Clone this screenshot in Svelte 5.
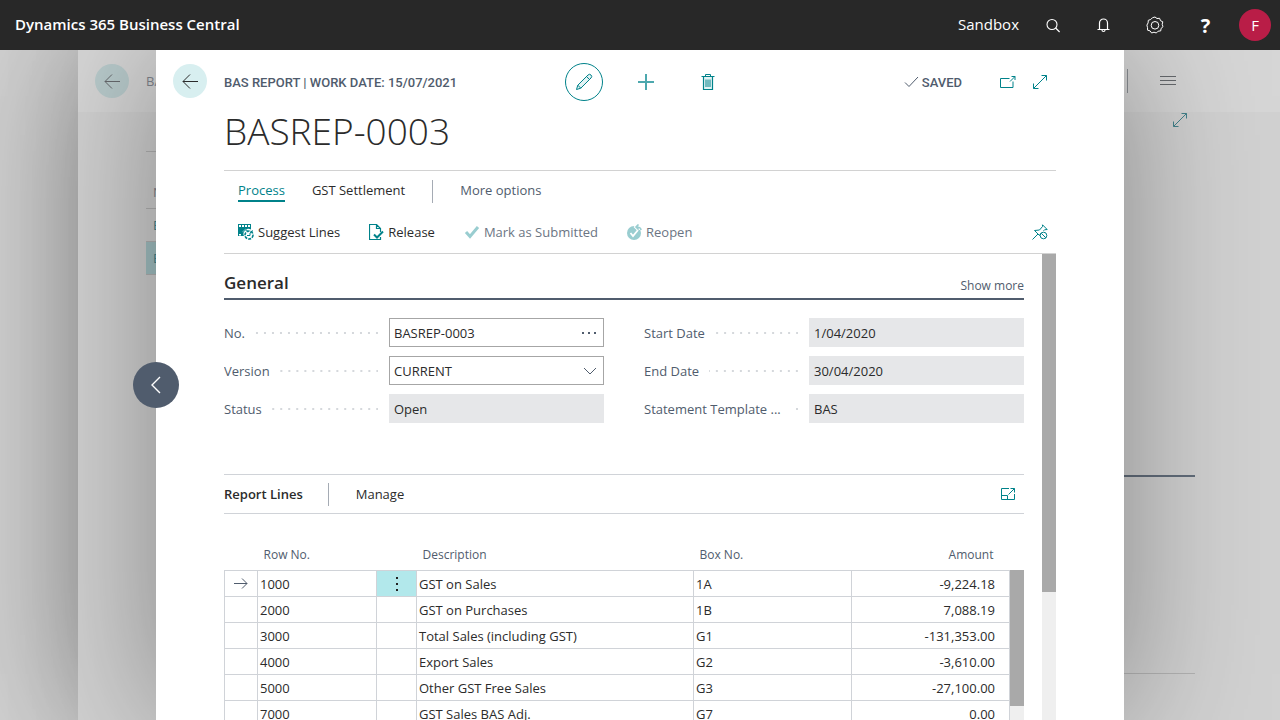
<script lang="ts">
	interface Line {
		no: string;
		description: string;
		box: string;
		amount: string;
	}

	let no = $state('BASREP-0003');
	let version = $state('CURRENT');
	let selected = $state(0);

	const tabs = ['Process', 'GST Settlement'];
	let activeTab = $state('Process');

	const lines: Line[] = [
		{ no: '1000', description: 'GST on Sales', box: '1A', amount: '-9,224.18' },
		{ no: '2000', description: 'GST on Purchases', box: '1B', amount: '7,088.19' },
		{ no: '3000', description: 'Total Sales (including GST)', box: 'G1', amount: '-131,353.00' },
		{ no: '4000', description: 'Export Sales', box: 'G2', amount: '-3,610.00' },
		{ no: '5000', description: 'Other GST Free Sales', box: 'G3', amount: '-27,100.00' },
		{ no: '7000', description: 'GST Sales BAS Adj.', box: 'G7', amount: '0.00' }
	];
</script>

{#snippet arrowLeft()}
	<svg width="16" height="16" viewBox="0 0 16 16" fill="none" stroke="currentColor">
		<path d="M16 8.500H1M8 1.500 1 8.500l7 7" />
	</svg>
{/snippet}

{#snippet expand()}
	<svg width="16" height="16" viewBox="0 0 16 16" fill="none" stroke="currentColor">
		<path d="M1.500 14.500 14.500 1.500M9.500 1.500h5v5M1.500 9.500v5h5" />
	</svg>
{/snippet}

<div class="shell">
	<header class="topbar">
		<span class="product">Dynamics 365 Business Central</span>
		<span class="environment">Sandbox</span>
		<nav>
			<button aria-label="Search">
				<svg width="16" height="16" viewBox="0 0 16 16" fill="none" stroke="currentColor" stroke-width="1.100">
					<circle cx="7" cy="7.500" r="5" />
					<path d="m10.600 11 4 4" />
				</svg>
			</button>
			<button aria-label="Notifications">
				<svg width="16" height="16" viewBox="0 0 16 16" fill="none" stroke="currentColor" stroke-width="1.200">
					<path d="M3.500 12.500V6a4 4 0 0 1 8 0v6.500M1.500 12.500h12M6 13a1.500 1.500 0 0 0 3 0" />
				</svg>
			</button>
			<button aria-label="Settings">
				<svg width="18" height="18" viewBox="0 0 18 18" fill="none" stroke="currentColor">
					<path d="m9 1 2 1.500 2.600-.2.900 2.400 2.300 1.100-.6 2.500.8 2.400-1.900 1.700-.4 2.500-2.600.3L10.300 17 8 16.200 5.600 17l-1.500-2.100-2.500-.7-.1-2.600L0.900 9.100l1.200-2.200.2-2.600 2.400-.8L6.500 1.700z" stroke-linejoin="round" />
					<circle cx="9" cy="9.300" r="3.800" />
				</svg>
			</button>
			<button class="help" aria-label="Help">?</button>
		</nav>
		<button class="avatar" aria-label="Account">F</button>
	</header>

	<main class="stage">
		<section class="behind" aria-hidden="true">
			<div class="behind-head">
				<span class="back">{@render arrowLeft()}</span>
				<span class="behind-title">BAS</span>
				<span class="behind-menu">
					<svg width="16" height="12" viewBox="0 0 16 12" stroke="currentColor"><path d="M0 1.500h16M0 5.500h16M0 9.500h16" /></svg>
				</span>
			</div>
			<div class="behind-body">
				<div class="behind-expand">{@render expand()}</div>
				<div class="behind-list">
					<div class="behind-row">No.</div>
					<div class="behind-row link">BAS</div>
					<div class="behind-row link current">BAS</div>
				</div>
				<div class="behind-part"></div>
			</div>
		</section>

		<section class="card">
			<button class="previous" aria-label="Previous record">
				<svg width="12" height="18" viewBox="0 0 12 18" fill="none" stroke="currentColor" stroke-width="1.400">
					<path d="M10 1 2 9l8 8" />
				</svg>
			</button>

			<div class="card-head">
				<button class="back" aria-label="Back">{@render arrowLeft()}</button>
				<span class="caption">BAS REPORT | WORK DATE: 15/07/2021</span>
				<div class="commands">
					<button class="round" aria-label="Edit">
						<svg width="18" height="18" viewBox="0 0 18 18" fill="none" stroke="currentColor">
							<path d="m1.500 16.500 1.300-4.300L13 2a2.100 2.100 0 0 1 3 3L5.800 15.200z" fill="#e3f3f4" />
							<path d="m2.800 12.200 3 3M11.500 3.500l3 3" />
						</svg>
					</button>
					<button aria-label="New">
						<svg width="18" height="18" viewBox="0 0 18 18" stroke="#4da8ae" stroke-width="2">
							<path d="M9 1v16M1 9h16" />
						</svg>
					</button>
					<button aria-label="Delete">
						<svg width="14" height="18" viewBox="0 0 14 18" fill="none" stroke="currentColor">
							<path d="M2.500 3.500h9v13h-9z" fill="#e3f3f4" stroke-width="1.200" />
							<path d="M0.500 3.500h13M4.500 3.500v-2h5v2M5 6.500v7.500M7 6.500v7.500M9 6.500v7.500" />
						</svg>
					</button>
				</div>
				<div class="status">
					<span class="saved">
						<svg width="15" height="12" viewBox="0 0 15 12" fill="none" stroke="currentColor"><path d="m1 6.500 4 4 9-9.500" /></svg>
						SAVED
					</span>
					<button aria-label="Open in new window">
						<svg width="16" height="14" viewBox="0 0 16 14" fill="none" stroke="currentColor">
							<path d="M9.500 3.500h-9v9h12.500v-6M10 6.500l5-5M11.500 1.500h3.500v3.500" />
						</svg>
					</button>
					<button aria-label="Expand page">{@render expand()}</button>
				</div>
			</div>

			<h1>BASREP-0003</h1>

			<nav class="tabs">
				{#each tabs as tab}
					<button class:active={tab === activeTab} onclick={() => (activeTab = tab)}>{tab}</button>
				{/each}
				<span class="separator"></span>
				<button class="more">More options</button>
			</nav>

			<div class="actions">
				<button>
					<svg width="16" height="16" viewBox="0 0 16 16">
						<path d="M0 0h13v5.500a5 5 0 0 0-7 6.500H0z" fill="#00828a" />
						<path d="M1 1h2v2H1zM4 1h2v2H4zM7 1h2v2H7zM10 1h2v2h-2zM1 10h2v1.500H1z" fill="#fff" />
						<path d="m4.500 8 3-2.500 3 2.500" fill="none" stroke="#4da8ae" stroke-width="1.500" />
						<circle cx="11" cy="11" r="4" fill="none" stroke="#00828a" stroke-width="1.600" stroke-dasharray="3 1" />
						<path d="M9 11.500h3V9l3-2.500" fill="none" stroke="#00828a" />
					</svg>
					Suggest Lines
				</button>
				<button>
					<svg width="15" height="16" viewBox="0 0 15 16" fill="none" stroke="#00828a">
						<path d="M11.500 13v2.500H.5V.5h7l4 4V8M7.500.5v4h4" stroke-width="1.200" />
						<path d="m5 10.500 3 3L14 7.500" stroke-width="2" />
					</svg>
					Release
				</button>
				<button disabled>
					<svg width="16" height="14" viewBox="0 0 16 14" fill="none" stroke="#99cdd0" stroke-width="3"><path d="m2 7 4 4.500L14 2" /></svg>
					Mark as Submitted
				</button>
				<button disabled>
					<svg width="15" height="16" viewBox="0 0 15 16">
						<circle cx="7" cy="9" r="7" fill="#99cdd0" />
						<path d="m3.500 9 2.500 3 5-6" fill="none" stroke="#fff" stroke-width="1.800" />
						<path d="M14 6c0-2-1.500-3-5-3M11.500.5 9 3l2.500 2.500" fill="none" stroke="#fff" stroke-width="3.500" />
						<path d="M14 6c0-2-1.500-3-5-3M11.500.5 9 3l2.500 2.500" fill="none" stroke="#99cdd0" stroke-width="1.600" />
					</svg>
					Reopen
				</button>
				<button class="pin" aria-label="Unpin actions">
					<svg width="16" height="16" viewBox="0 0 16 16" fill="none" stroke="#00828a">
						<path d="M.5 15.500 6 10M8.500 9.500 7.500 11.500 2.500 6.500 7.500 6 10.500 2.500V.8l4.700 4.700-2.700.3-1 1" />
						<circle cx="11.500" cy="11.500" r="3.300" />
						<path d="m9.300 9.300 4.500 4.500" />
					</svg>
				</button>
			</div>

			<div class="body">
				<div class="content">
					<div class="group-head">
						<h2>General</h2>
						<button>Show more</button>
					</div>

					<div class="fields">
						<div class="field">
							<label for="no">No.</label>
							<div class="control">
								<input id="no" bind:value={no} />
								<button class="assist" aria-label="Choose number series">
									<svg width="16" height="4" viewBox="0 0 16 4" fill="#505c6d"><path d="M1 1h2v2H1zM7 1h2v2H7zM13 1h2v2h-2z" /></svg>
								</button>
							</div>
						</div>
						<div class="field">
							<label for="start">Start Date</label>
							<div class="control"><input id="start" value="1/04/2020" readonly /></div>
						</div>
						<div class="field">
							<label for="version">Version</label>
							<div class="control">
								<select id="version" bind:value={version}>
									<option>CURRENT</option>
								</select>
								<svg class="chevron" width="14" height="8" viewBox="0 0 14 8" fill="none" stroke="#505c6d"><path d="m1 1 6 6 6-6" /></svg>
							</div>
						</div>
						<div class="field">
							<label for="end">End Date</label>
							<div class="control"><input id="end" value="30/04/2020" readonly /></div>
						</div>
						<div class="field">
							<label for="status">Status</label>
							<div class="control"><input id="status" value="Open" readonly /></div>
						</div>
						<div class="field">
							<label for="template">Statement Template ...</label>
							<div class="control"><input id="template" value="BAS" readonly /></div>
						</div>
					</div>

					<div class="part-head">
						<h3>Report Lines</h3>
						<span class="separator"></span>
						<button>Manage</button>
						<button class="focus" aria-label="Focus mode">
							<svg width="16" height="14" viewBox="0 0 16 14" fill="none" stroke="#00828a">
								<path d="M9 1.500H1.500v11h13V7M1.500 8.500h6v4M8.500 7.500l6-6M10.500 1.500h4v4" />
							</svg>
						</button>
					</div>

					<div class="grid">
						<table>
							<thead>
								<tr>
									<th class="marker"></th>
									<th class="row-no">Row No.</th>
									<th class="menu"></th>
									<th>Description</th>
									<th class="box">Box No.</th>
									<th class="amount">Amount</th>
								</tr>
							</thead>
							<tbody>
								{#each lines as line, i}
									<tr class:selected={i === selected} onclick={() => (selected = i)}>
										<td class="marker">
											{#if i === selected}
												<svg width="14" height="12" viewBox="0 0 14 12" fill="none" stroke="#505c6d"><path d="M0 5.500h13M8 0.500l5 5-5 5" /></svg>
											{/if}
										</td>
										<td>{line.no}</td>
										<td class="menu">
											{#if i === selected}
												<button aria-label="Row options">
													<svg width="4" height="16" viewBox="0 0 4 16" fill="#212121"><path d="M1 1h2v2H1zM1 7h2v2H1zM1 13h2v2H1z" /></svg>
												</button>
											{/if}
										</td>
										<td>{line.description}</td>
										<td>{line.box}</td>
										<td class="amount">{line.amount}</td>
									</tr>
								{/each}
							</tbody>
						</table>
						<div class="rail"><div class="thumb short"></div></div>
					</div>
				</div>
				<div class="rail"><div class="thumb"></div></div>
			</div>
		</section>
	</main>
</div>

<style>
	:global(body) {
		overflow: hidden;
		background: #d1d1d1;
	}

	.shell {
		display: flex;
		flex-direction: column;
		height: 100vh;
		font-family: 'Open Sans', 'Noto Sans', sans-serif;
		font-size: 13px;
		color: #2b2b2b;
	}

	button {
		display: inline-flex;
		align-items: center;
		justify-content: center;
		padding: 0;
		border: 0;
		background: none;
		font: inherit;
		color: inherit;
		cursor: pointer;
	}

	svg {
		display: block;
		flex: none;
	}

	h1,
	h2,
	h3 {
		margin: 0;
	}

	/* Top bar */
	.topbar {
		display: flex;
		align-items: center;
		flex: none;
		height: 50px;
		padding: 0 9px 0 15px;
		background: #282828;
		color: #fff;
		font-size: 15px;
	}

	.product,
	.environment {
		padding-bottom: 2px;
	}

	.product {
		flex: 1;
		font-weight: 600;
	}

	.topbar nav {
		display: flex;
		margin: 0 8px;
	}

	.topbar nav button {
		width: 51px;
		height: 50px;
	}

	.topbar .help {
		font-size: 20px;
		font-weight: 700;
	}

	.avatar {
		width: 32px;
		height: 32px;
		border-radius: 50%;
		background: #b91d47;
	}

	/* The list page and the card share one cell, the card on top */
	.stage {
		display: grid;
		grid-template: minmax(0, 1fr) / minmax(0, 1fr);
		flex: 1;
		min-height: 0;
		overflow: hidden;
	}

	.behind,
	.card {
		grid-area: 1 / 1;
		box-shadow: 0 0 130px rgba(0, 0, 0, 0.36);
	}

	.behind {
		margin-left: 78px;
		background: #d1d1d1;
		color: #80848c;
	}

	.behind-head {
		display: flex;
		align-items: center;
		height: 62px;
		padding: 0 104px 0 17px;
		background: #d6d6d6;
	}

	.behind .back {
		background: #b9cbcc;
		color: #66696d;
	}

	.behind-title {
		flex: 1;
		margin-left: 17px;
	}

	.behind-menu {
		padding: 6px 0 6px 32px;
		border-left: 1px solid #8b8f94;
		color: #66696d;
	}

	.behind-body {
		padding: 0 85px 0 68px;
	}

	.behind-expand {
		display: flex;
		justify-content: flex-end;
		height: 39px;
		padding-right: 7px;
		color: #43828b;
	}

	.behind-list {
		width: 50%;
		padding-top: 24px;
		border-top: 1px solid #b3b3b3;
	}

	.behind-row {
		height: 32px;
		padding-left: 7px;
		line-height: 32px;
		border-bottom: 1px solid #b3b3b3;
	}

	.link {
		color: #43828b;
	}

	.current {
		background: #a3c1c3;
	}

	.behind-part {
		height: 196px;
		margin: 200px 0 0 50%;
		border-top: 2px solid #626d7b;
		border-bottom: 1px solid #b3b3b3;
	}

	/* Card */
	.card {
		position: relative;
		display: flex;
		flex-direction: column;
		margin: 0 156px;
		padding: 0 68px;
		background: #fff;
	}

	.previous {
		position: absolute;
		top: 312px;
		left: -23px;
		width: 46px;
		height: 46px;
		border-radius: 50%;
		background: #505c6d;
		color: #fff;
	}

	.card-head {
		position: relative;
		display: grid;
		grid-template-columns: 1fr auto 1fr;
		align-items: center;
		flex: none;
		height: 64px;
		margin-left: -51px;
		padding-left: 51px;
	}

	.back {
		display: inline-flex;
		align-items: center;
		justify-content: center;
		width: 34px;
		height: 34px;
		border-radius: 50%;
		background: #d8eff0;
	}

	.card-head .back {
		position: absolute;
		top: 14px;
		left: 0;
	}

	.caption,
	.saved {
		font-family: Roboto, sans-serif;
		font-size: 13px;
		font-weight: 500;
		color: #505c6d;
		white-space: nowrap;
	}

	.commands {
		display: flex;
		gap: 24px;
		padding-left: 12px;
		color: #00828a;
	}

	.commands button {
		box-sizing: border-box;
		width: 38px;
		height: 38px;
	}

	.commands .round {
		border: 1px solid #00828a;
		border-radius: 50%;
	}

	.status {
		display: flex;
		align-items: center;
		justify-content: flex-end;
		color: #00828a;
	}

	.status button {
		width: 32px;
		height: 32px;
	}

	.saved {
		display: flex;
		align-items: center;
		gap: 3px;
		margin-right: 30px;
	}

	h1 {
		flex: none;
		height: 56px;
		font-size: 37px;
		font-weight: 300;
		line-height: 34px;
	}

	.tabs {
		display: flex;
		align-items: center;
		gap: 27px;
		flex: none;
		height: 40px;
		padding-left: 14px;
		border-top: 1px solid #d2d2d2;
	}

	.tabs button {
		height: 21px;
		border-bottom: 2px solid transparent;
	}

	.tabs .active {
		border-color: #00828a;
		color: #00828a;
	}

	.separator {
		width: 1px;
		height: 23px;
		background: #a5abb4;
	}

	.tabs .more {
		color: #505c6d;
	}

	.actions {
		display: flex;
		align-items: center;
		gap: 29px;
		flex: none;
		height: 42px;
		padding: 0 8px 0 14px;
		border-bottom: 1px solid #d2d2d2;
	}

	.actions button {
		gap: 4px;
	}

	.actions button:disabled {
		color: #6b7583;
	}

	.actions .pin {
		margin-left: auto;
	}

	.body {
		display: flex;
		gap: 18px;
		flex: 1;
		min-height: 0;
		overflow: hidden;
	}

	.content {
		flex: 1;
		min-width: 0;
	}

	.rail {
		flex: none;
		width: 14px;
		background: #efefef;
	}

	.thumb {
		height: 338px;
		background: #a9a9a9;
	}

	.short {
		height: 136px;
	}

	.group-head {
		display: flex;
		align-items: flex-end;
		justify-content: space-between;
		height: 44px;
		border-bottom: 2px solid #505c6d;
	}

	h2 {
		font-size: 17px;
		font-weight: 600;
		line-height: 31px;
	}

	.group-head button {
		height: 26px;
		font-size: 12px;
		color: #505c6d;
	}

	.fields {
		display: grid;
		grid-template-columns: 1fr 1fr;
		gap: 9px 40px;
		padding: 18px 0 51px;
	}

	.field {
		display: flex;
		align-items: center;
	}

	label {
		display: flex;
		flex: 0 0 154px;
		align-items: center;
		gap: 10px;
		margin-right: 11px;
		color: #505c6d;
		white-space: nowrap;
	}

	/* Dotted leader between the caption and its control */
	label::after {
		content: '';
		flex: 1;
		height: 2px;
		background: linear-gradient(to right, transparent 6px, #d5d8dc 6px) right / 8px 2px repeat-x;
	}

	.control {
		position: relative;
		flex: 1;
		min-width: 0;
	}

	input,
	select {
		display: block;
		box-sizing: border-box;
		width: 100%;
		height: 29px;
		padding: 0 4px;
		border: 1px solid #a6a6a6;
		border-radius: 0;
		background: #fff;
		font: inherit;
		color: inherit;
		appearance: none;
	}

	input:read-only {
		border-color: #e6e7e9;
		background: #e6e7e9;
	}

	.assist {
		position: absolute;
		top: 0;
		right: 7px;
		height: 29px;
	}

	.chevron {
		position: absolute;
		top: 11px;
		right: 7px;
		pointer-events: none;
	}

	.part-head {
		display: flex;
		align-items: center;
		height: 38px;
		border-top: 1px solid #d0d3d8;
		border-bottom: 1px solid #d0d3d8;
	}

	h3 {
		font-size: 13px;
		font-weight: 600;
	}

	.part-head .separator {
		margin: 0 27px 0 25px;
	}

	.part-head .focus {
		margin: 0 8px 0 auto;
	}

	.grid {
		display: flex;
		padding-top: 25px;
	}

	.grid .rail {
		margin-top: 31px;
	}

	table {
		flex: 1;
		table-layout: fixed;
		border-collapse: collapse;
	}

	th {
		height: 31px;
		padding: 0 6px;
		font-size: 12px;
		font-weight: 400;
		text-align: left;
		color: #505c6d;
	}

	td {
		height: 25px;
		padding: 0 2px;
		border: 1px solid #d0d3d8;
	}

	th.marker {
		width: 21px;
	}

	th.row-no {
		width: 107px;
	}

	th.menu {
		width: 28px;
	}

	th.box {
		width: 146px;
	}

	th.amount {
		width: 136px;
		padding-right: 16px;
		text-align: right;
	}

	td.amount {
		padding-right: 14px;
		text-align: right;
	}

	td.marker svg {
		margin: 0 auto;
	}

	td.menu {
		text-align: center;
	}

	td.menu button {
		width: 100%;
		height: 25px;
	}

	.selected .menu {
		padding: 0;
		background: #b2e8eb;
	}
</style>
